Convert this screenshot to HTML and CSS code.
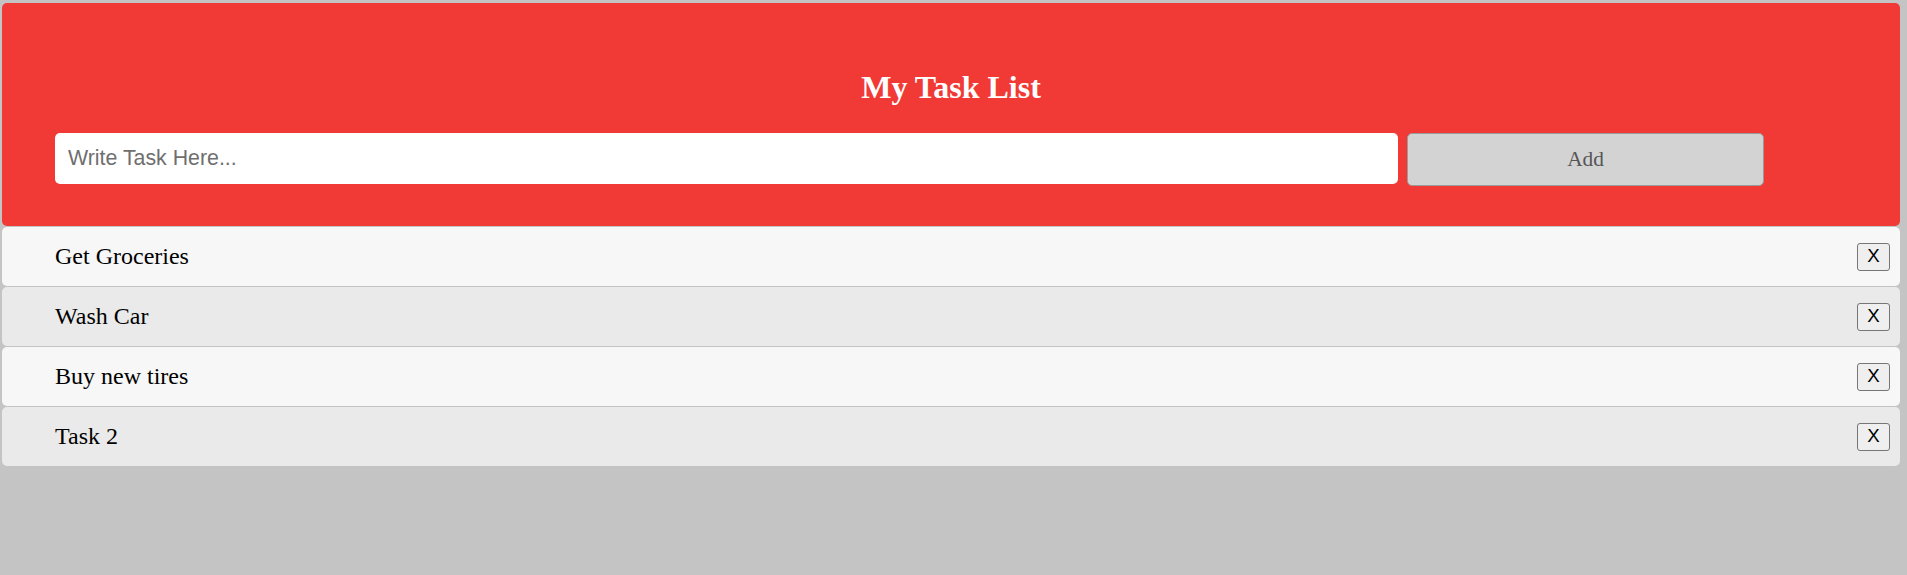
FILE: index.html
```html
<!DOCTYPE html>
<html>
<head>
<meta charset="utf-8">
<title>My Task List</title>
<link rel="stylesheet" href="styles.css">
</head>
<body>
<div class="app">
  <div class="header">
    <h2 class="title">My Task List</h2>
    <div class="entry">
      <input class="task-input" type="text" placeholder="Write Task Here...">
      <button class="add-btn">Add</button>
    </div>
  </div>
  <ul class="tasks">
    <li class="task"><span class="task-text">Get Groceries</span><button class="del-btn">X</button></li>
    <li class="task"><span class="task-text">Wash Car</span><button class="del-btn">X</button></li>
    <li class="task"><span class="task-text">Buy new tires</span><button class="del-btn">X</button></li>
    <li class="task"><span class="task-text">Task 2</span><button class="del-btn">X</button></li>
  </ul>
</div>
</body>
</html>
```

FILE: styles.css
```css
* {
  box-sizing: border-box;
}

html, body {
  margin: 0;
  padding: 0;
}

body {
  background: #c4c4c4;
  font-family: "Liberation Serif", "Times New Roman", serif;
  height: 575px;
}

.app {
  padding: 3px 7px 0 2px;
}

.header {
  background: #f13a35;
  border-radius: 5px;
  padding: 40px 53px 40px 53px;
  color: #fff;
  text-align: center;
}

.title {
  margin: 0 0 27px 0;
  padding-top: 26px;
  font-size: 32px;
  font-weight: bold;
  line-height: 37px;
}

.entry {
  display: flex;
  align-items: flex-start;
  gap: 9px;
}

.task-input {
  width: 1343px;
  height: 51px;
  border: none;
  border-radius: 5px;
  padding: 0 13px;
  margin: 0;
  font-family: "Liberation Sans", Arial, sans-serif;
  font-size: 21.33px;
  color: #333;
  background: #fff;
  outline: none;
}

.task-input::placeholder {
  color: #6f6f6f;
}

.add-btn {
  width: 357px;
  height: 53px;
  margin: 0;
  background: #d3d3d3;
  border: 1px solid #9a9a9a;
  border-radius: 5px;
  color: #555;
  font-family: "Liberation Serif", "Times New Roman", serif;
  font-size: 21.33px;
}

.tasks {
  list-style: none;
  margin: 1px 0 0 0;
  padding: 0;
  display: flex;
  flex-direction: column;
  gap: 1px;
}

.task {
  height: 59px;
  border-radius: 5px;
  background: #eaeaea;
  padding: 0 10px 0 53px;
  display: flex;
  align-items: center;
  justify-content: space-between;
  font-size: 24px;
  color: #000;
}

.task:nth-child(odd) {
  background: #f7f7f7;
}

.del-btn {
  width: 33px;
  height: 28px;
  padding: 0;
  margin: 0;
  background: #efefef;
  border: 1px solid #767676;
  border-radius: 3px;
  font-family: "Liberation Sans", Arial, sans-serif;
  font-size: 18.67px;
  color: #000;
  line-height: 1;
}
```
